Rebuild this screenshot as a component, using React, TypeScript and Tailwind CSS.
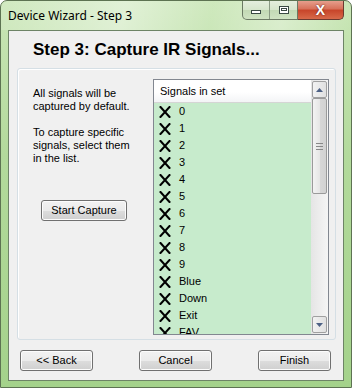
import React from "react";

const XMark = () => (
  <svg width="12" height="12" viewBox="0 0 12 12" className="shrink-0">
    <path d="M1.5 1 L10.5 11 M10.5 1 L1.5 11" stroke="#000" strokeWidth="2" strokeLinecap="square" fill="none" />
  </svg>
);

const items = ["0", "1", "2", "3", "4", "5", "6", "7", "8", "9", "Blue", "Down", "Exit", "FAV"];

const Btn = ({ label, w }: { label: string; w: string }) => (
  <div
    className={`${w} h-[21px] flex items-center justify-center rounded-[3px] border border-[#707070] bg-[linear-gradient(#f2f2f2_0%,#ebebeb_50%,#dddddd_51%,#cfcfcf_100%)] shadow-[inset_0_0_0_1px_#fcfcfc] text-[11px] text-black`}
  >
    {label}
  </div>
);

export default function App() {
  return (
    <div
      className="w-[352px] h-[388px] relative overflow-hidden rounded-t-[7px] border border-[#5d7352] bg-[linear-gradient(180deg,#c9e6b6_0%,#b3da9c_40%,#a4d28b_100%)]"
      style={{ fontFamily: '"Liberation Sans", Arial, sans-serif' }}
    >
      {/* Title bar */}
      <div className="h-[29px] flex items-start justify-between pl-[7px] pr-[7px] bg-[linear-gradient(100deg,rgba(255,255,255,0.15)_0%,rgba(255,255,255,0.45)_35%,rgba(255,255,255,0.1)_60%,rgba(255,255,255,0.35)_80%,rgba(255,255,255,0)_100%)]">
        <div className="pt-[8px] text-[12px] leading-[14px] text-black" style={{ fontFamily: '"Noto Sans", "Liberation Sans", sans-serif' }}>
          Device Wizard - Step 3
        </div>
        <div className="flex -mt-px">
          <div className="flex h-[20px] border border-[#6b7a64] border-t-0 rounded-bl-[5px] overflow-hidden bg-[linear-gradient(#e6efe0_0%,#d6e6cc_50%,#c2d9b4_51%,#cfe3c2_100%)]">
            <div className="w-[27px] flex items-center justify-center border-r border-[#8a9a84]">
              <div className="w-[10px] h-[4px] bg-white border border-[#3a4a44] mt-[5px]" />
            </div>
            <div className="w-[27px] flex items-center justify-center">
              <div className="w-[10px] h-[8px] border border-[#3a4a44] bg-white flex items-center justify-center">
                <div className="w-[6px] h-[3px] border border-[#3a4a44]" />
              </div>
            </div>
          </div>
          <div className="w-[46px] h-[20px] flex items-center justify-center border border-t-0 border-l-0 border-[#6b3a30] rounded-br-[5px] bg-[linear-gradient(#e8a493_0%,#d8735c_45%,#c8462b_55%,#d86a4a_100%)]">
            <span className="text-white font-bold text-[14px] leading-none" style={{ textShadow: "0 0 2px #5a1a10" }}>X</span>
          </div>
        </div>
      </div>

      {/* Client */}
      <div className="mx-[7px] h-[351px] border border-[#6d8466] bg-[#f0f0f0] flex flex-col">
        <div className="h-[37px] pl-[24px] pt-[10px] text-[17px] leading-[18px] font-bold text-black">
          Step 3: Capture IR Signals...
        </div>
        {/* Group box */}
        <div className="ml-[8px] w-[319px] h-[272px] rounded-[3px] border border-[#d5dfe5] shadow-[inset_1px_1px_0_#ffffff] flex">
          <div className="w-[135px] flex flex-col pl-[15px] pt-[18px]">
            <div className="text-[11px] leading-[13px] text-black">
              All signals will be<br />captured by default.<br /><br />To capture specific<br />signals, select them<br />in the list.
            </div>
            <div className="mt-[35px] ml-[8px]">
              <Btn label="Start Capture" w="w-[86px]" />
            </div>
          </div>
          <div className="mt-[10px] w-[176px] h-[256px] border border-[#828790] bg-white flex">
            <div className="flex-1 flex flex-col overflow-hidden">
              <div className="h-[23px] shrink-0 flex items-center pl-[6px] border-b border-[#d5d5d5] bg-[linear-gradient(#ffffff_0%,#ffffff_55%,#f3f4f6_100%)] text-[11px] text-black">
                Signals in set
              </div>
              <div className="flex-1 bg-[#c7ebcc] overflow-hidden">
                {items.map((it) => (
                  <div key={it} className="h-[17px] flex items-center pl-[5px] gap-[8px] text-[11px] text-black">
                    <XMark />
                    <span>{it}</span>
                  </div>
                ))}
              </div>
            </div>
            {/* Scrollbar */}
            <div className="w-[17px] flex flex-col bg-[linear-gradient(90deg,#e5e5e5,#f5f5f5)] py-px">
              <div className="h-[17px] mx-px rounded-[2px] border border-[#a0a0a0] bg-[linear-gradient(90deg,#f2f2f2,#e0e0e0)] flex items-center justify-center">
                <svg width="7" height="4" viewBox="0 0 7 4"><path d="M0 4 L3.5 0 L7 4 Z" fill="#4d6185" /></svg>
              </div>
              <div className="h-[96px] mx-px rounded-[2px] border border-[#9a9a9a] bg-[linear-gradient(90deg,#f3f3f3_0%,#e6e6e6_50%,#d7d7d7_51%,#d2d2d2_100%)] flex flex-col items-center justify-center gap-[2px]">
                <div className="w-[7px] h-px bg-[#888]" />
                <div className="w-[7px] h-px bg-[#888]" />
                <div className="w-[7px] h-px bg-[#888]" />
              </div>
              <div className="flex-1" />
              <div className="h-[17px] mx-px rounded-[2px] border border-[#a0a0a0] bg-[linear-gradient(90deg,#f2f2f2,#e0e0e0)] flex items-center justify-center">
                <svg width="7" height="4" viewBox="0 0 7 4"><path d="M0 0 L3.5 4 L7 0 Z" fill="#4d6185" /></svg>
              </div>
            </div>
          </div>
        </div>
        {/* Bottom buttons */}
        <div className="mt-[10px] flex justify-between pl-[11px] pr-[12px]">
          <Btn label="<< Back" w="w-[73px]" />
          <Btn label="Cancel" w="w-[73px]" />
          <Btn label="Finish" w="w-[73px]" />
        </div>
      </div>
    </div>
  );
}
